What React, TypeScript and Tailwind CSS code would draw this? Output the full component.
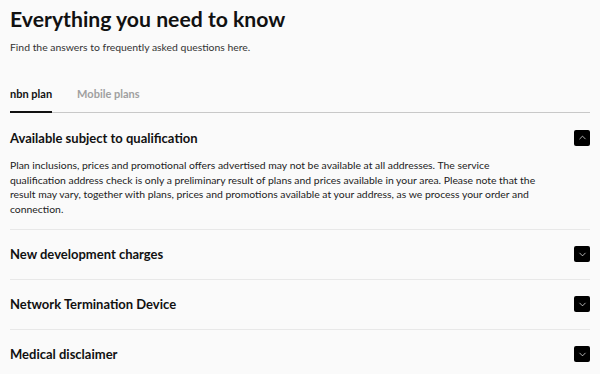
import React, { useState } from 'react';
import { ChevronDown, ChevronUp } from 'lucide-react';

const faqs = [
  {
    title: 'Available subject to qualification',
    body: 'Plan inclusions, prices and promotional offers advertised may not be available at all addresses. The service qualification address check is only a preliminary result of plans and prices available in your area. Please note that the result may vary, together with plans, prices and promotions available at your address, as we process your order and connection.',
  },
  { title: 'New development charges', body: '' },
  { title: 'Network Termination Device', body: '' },
  { title: 'Medical disclaimer', body: '' },
];

const App = () => {
  const [tab, setTab] = useState('nbn');
  const [open, setOpen] = useState(0);

  return (
    <div
      className="min-h-screen bg-[#fafafa] px-[10px] text-[#111]"
      style={{ fontFamily: 'Lato, "Noto Sans", sans-serif' }}
    >
      <h1 className="pt-[4px] text-[21.2px] font-bold leading-[30px]">
        Everything you need to know
      </h1>
      <p className="mt-[6px] text-[10.4px] leading-[14px] text-[#333]">
        Find the answers to frequently asked questions here.
      </p>

      <div className="mt-[33px] flex border-b border-[#c8c8c8]">
        {[
          { id: 'nbn', name: 'nbn plan' },
          { id: 'mobile', name: 'Mobile plans' },
        ].map(({ id, name }) => (
          <button
            key={id}
            onClick={() => setTab(id)}
            className={`${
              tab === id ? 'border-[#111] text-[#111]' : 'border-transparent text-[#a0a0a0]'
            } -mb-px mr-[25px] border-b-2 pb-[10px] text-[11px] font-bold leading-[14px]`}
          >
            {name}
          </button>
        ))}
      </div>

      <div className="divide-y divide-[#e8e8e8]">
        {faqs.map((faq, i) => (
          <div key={faq.title}>
            <button
              onClick={() => setOpen(open === i ? -1 : i)}
              className="flex h-[49px] w-full items-center justify-between text-left"
            >
              <span className="text-[13px] font-bold leading-[18px]">{faq.title}</span>
              <span className="flex h-[16px] w-[16px] items-center justify-center rounded-[2px] bg-black text-white">
                {open === i ? (
                  <ChevronUp className="h-[11px] w-[11px]" strokeWidth={1.5} />
                ) : (
                  <ChevronDown className="h-[11px] w-[11px]" strokeWidth={1.5} />
                )}
              </span>
            </button>
            {open === i && faq.body && (
              <p className="-mt-[4px] max-w-[532px] pb-[12px] text-[10.4px] leading-[14.7px] text-[#222]">
                {faq.body}
              </p>
            )}
          </div>
        ))}
      </div>
    </div>
  );
};

export default App;
